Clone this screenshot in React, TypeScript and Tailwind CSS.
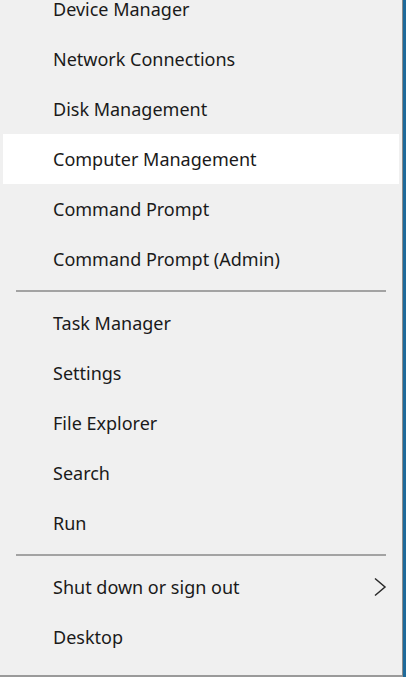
const GROUPS: { label: string; hover?: boolean; submenu?: boolean }[][] = [
  [
    { label: "Device Manager" },
    { label: "Network Connections" },
    { label: "Disk Management" },
    { label: "Computer Management", hover: true },
    { label: "Command Prompt" },
    { label: "Command Prompt (Admin)" },
  ],
  [
    { label: "Task Manager" },
    { label: "Settings" },
    { label: "File Explorer" },
    { label: "Search" },
    { label: "Run" },
  ],
  [{ label: "Shut down or sign out", submenu: true }, { label: "Desktop" }],
];

export default function App() {
  return (
    <div className="flex h-[677px] w-[406px] overflow-hidden bg-[#1f6a9a]">
      <div
        className="flex h-[677px] w-[403px] flex-col overflow-hidden border-r border-b-2 border-r-[#8c8c8c] border-b-[#9a9a9a] bg-[#f0f0f0]"
        style={{ fontFamily: '"Noto Sans", "Open Sans", sans-serif' }}
      >
        <div className="-mt-4 flex flex-col">
          {GROUPS.map((group, gi) => (
            <div key={gi} className="flex flex-col">
              {gi > 0 && (
                <div className="flex h-[14px] items-center px-4">
                  <div className="h-[2px] w-[371px] bg-[#a3a3a3]" />
                </div>
              )}
              {group.map((item) => (
                <MenuItem key={item.label} {...item} />
              ))}
            </div>
          ))}
        </div>
      </div>
    </div>
  );
}

function MenuItem({ label, hover, submenu }: { label: string; hover?: boolean; submenu?: boolean }) {
  return (
    <div className="flex h-[50px] items-center px-[3px]">
      <div
        className={
          hover
            ? "flex h-[50px] w-[396px] items-center bg-white pl-[50px]"
            : "flex h-[50px] w-[396px] items-center pl-[50px]"
        }
      >
        <span className="flex-1 text-[18px] text-[#1a1a1a]">{label}</span>
        {submenu && (
          <svg width="14" height="20" viewBox="0 0 14 20" className="mr-[12px]">
            <path d="M2 1.5 L12 10 L2 18.5" fill="none" stroke="#2a2a2a" strokeWidth="1.5" />
          </svg>
        )}
      </div>
    </div>
  );
}
